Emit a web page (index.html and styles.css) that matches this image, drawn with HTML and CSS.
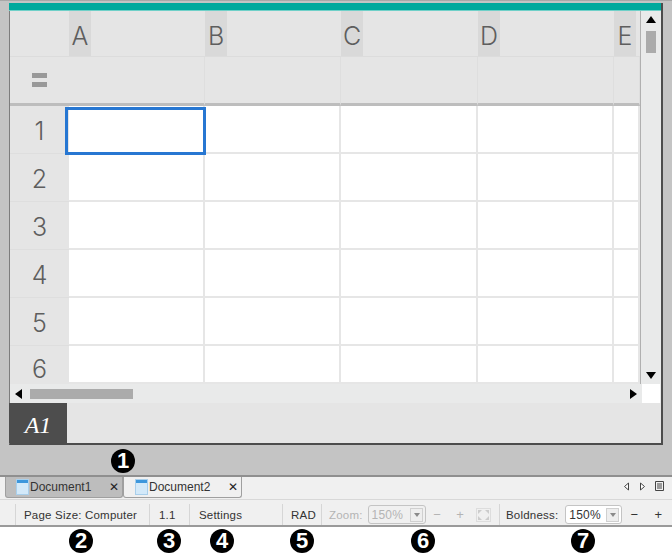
FILE: index.html
```html
<!DOCTYPE html>
<html lang="en">
<head>
  <meta charset="UTF-8">
  <meta name="viewport" content="width=device-width, initial-scale=1">
  <title>Document workspace</title>
  <link rel="stylesheet" href="styles.css">
</head>

<body>

  <!-- gray area around the document -->
  <div class="workspace">
    <div class="doc">
      <div class="doc__bar"></div>

      <div class="sheet-wrap">
        <div class="sheet">
          <div class="head head--corner"></div>
          <div class="head"><span class="col-chip">A</span></div>
          <div class="head"><span class="col-chip">B</span></div>
          <div class="head"><span class="col-chip">C</span></div>
          <div class="head"><span class="col-chip">D</span></div>
          <div class="head"><span class="col-chip">E</span></div>

          <div class="formula formula--corner"><span class="equals"></span></div>
          <div class="formula"></div>
          <div class="formula"></div>
          <div class="formula"></div>
          <div class="formula"></div>
          <div class="formula"></div>

          <div class="num">1</div>
          <div class="cell cell--active"></div>
          <div class="cell"></div><div class="cell"></div><div class="cell"></div><div class="cell"></div>

          <div class="num">2</div>
          <div class="cell"></div><div class="cell"></div><div class="cell"></div><div class="cell"></div><div class="cell"></div>

          <div class="num">3</div>
          <div class="cell"></div><div class="cell"></div><div class="cell"></div><div class="cell"></div><div class="cell"></div>

          <div class="num">4</div>
          <div class="cell"></div><div class="cell"></div><div class="cell"></div><div class="cell"></div><div class="cell"></div>

          <div class="num">5</div>
          <div class="cell"></div><div class="cell"></div><div class="cell"></div><div class="cell"></div><div class="cell"></div>

          <div class="num num--cut">6</div>
          <div class="cell"></div><div class="cell"></div><div class="cell"></div><div class="cell"></div><div class="cell"></div>
        </div>

        <div class="vscroll">
          <span class="arrow arrow--up"></span>
          <span class="vscroll__thumb"></span>
          <span class="arrow arrow--down"></span>
        </div>
      </div>

      <div class="hscroll">
        <span class="arrow arrow--left"></span>
        <span class="hscroll__thumb"></span>
        <span class="arrow arrow--right"></span>
        <span class="hscroll__corner"></span>
      </div>

      <div class="entry">
        <div class="entry__ref">A1</div>
      </div>
    </div>
  </div>

  <!-- document tabs -->
  <div class="tabs">
    <div class="tab tab--active">
      <svg class="tab__icon" width="13" height="16" viewBox="0 0 13 16"><rect x="0.5" y="0.5" width="12" height="15" fill="#d3e9f9" stroke="#a9cfeb"/><rect x="1" y="1" width="11" height="3" fill="#3d97dc"/></svg>
      <span class="tab__label">Document1</span>
      <span class="tab__close">&#10005;</span>
    </div>
    <div class="tab tab--second">
      <svg class="tab__icon" width="13" height="16" viewBox="0 0 13 16"><rect x="0.5" y="0.5" width="12" height="15" fill="#d3e9f9" stroke="#a9cfeb"/><rect x="1" y="1" width="11" height="3" fill="#3d97dc"/></svg>
      <span class="tab__label">Document2</span>
      <span class="tab__close">&#10005;</span>
    </div>
    <div class="tabs__nav">
      <svg width="7" height="9" viewBox="0 0 7 9"><path d="M5.5 1 1.5 4.5 5.5 8Z" fill="#fff" stroke="#444"/></svg>
      <svg width="7" height="9" viewBox="0 0 7 9"><path d="M1.5 1 5.5 4.5 1.5 8Z" fill="#fff" stroke="#444"/></svg>
      <svg width="9" height="10" viewBox="0 0 9 10"><path d="M.5.5h8v9h-8zM2 3h5M2 5h5M2 7h5" fill="none" stroke="#444"/></svg>
    </div>
  </div>

  <!-- status bar -->
  <div class="status">
    <div class="status__item status__item--page">Page Size: Computer</div>
    <div class="status__item status__item--num">1.1</div>
    <div class="status__item status__item--settings">Settings</div>
    <div class="status__item status__item--rad">RAD</div>
    <div class="status__item status__item--zoom is-off">
      <span>Zoom:</span>
      <span class="combo"><span class="combo__val">150%</span><span class="combo__btn"></span></span>
      <span class="step">&minus;</span>
      <span class="step">+</span>
      <svg class="fit-icon" width="15" height="14" viewBox="0 0 15 14"><rect x=".5" y=".5" width="14" height="13" fill="none" stroke="#ddd"/><path d="M2 2h4L2 6ZM13 2H9l4 4ZM2 12h4L2 8ZM13 12H9l4-4Z" fill="#ccc"/></svg>
    </div>
    <div class="status__item status__item--bold">
      <span>Boldness:</span>
      <span class="combo"><span class="combo__val">150%</span><span class="combo__btn"></span></span>
      <span class="step">&minus;</span>
      <span class="step">+</span>
    </div>
  </div>

  <!-- numbered callouts -->
  <span class="callout callout--1">1</span>
  <span class="callout callout--2">2</span>
  <span class="callout callout--3">3</span>
  <span class="callout callout--4">4</span>
  <span class="callout callout--5">5</span>
  <span class="callout callout--6">6</span>
  <span class="callout callout--7">7</span>

</body>
</html>
```

FILE: styles.css
```css
/* Reset */
*, *::before, *::after {
  margin: 0;
  padding: 0;
  box-sizing: border-box;
}
body {
  position: relative;
  width: 672px;
  height: 556px;
  overflow: hidden;
  background: #fff;
  font-family: "Liberation Sans", Arial, sans-serif;
  font-size: 11.5px;
  color: #333;
}

/* ===== Gray area ===== */
.workspace {
  height: 477px;
  padding: 2px 9px 0 9px;
  background: #c4c4c4;
  border-top: 1px solid #a8a8a8;
  border-bottom: 2px solid #8f8f8f;
}
.doc {
  height: 442px;
  background: #e5e5e5;
  border-left: 1px solid #7d7d7d;
  border-right: 2px solid #4c4c4c;
  border-bottom: 2px solid #4c4c4c;
}
.doc__bar {
  height: 8px;
  margin-left: -1px;
  background: #00a99d;
  border-bottom: 1px solid #6fd0c8;
}

/* ===== Sheet ===== */
.sheet-wrap {
  display: flex;
  height: 373px;
}
.sheet {
  flex: none;
  width: 630px;
  height: 373px;
  overflow: hidden;
  display: grid;
  grid-template-columns: 59px 136px 136px 137px 136px 26px;
  grid-template-rows: 46px 49px repeat(5, 48px) 38px;
  background: #fff;
}
.head {
  background: #e5e5e5;
  border-bottom: 1px solid #dcdcdc;
}
.head--corner {
  margin-right: 0;
}
.col-chip {
  display: block;
  width: 22px;
  height: 45px;
  background: #d9d9d9;
  font-family: "Inter", sans-serif;
  font-weight: 300;
  font-size: 25px;
  line-height: 50px;
  text-align: center;
  color: #5e5e5e;
}
.formula {
  background: #e5e5e5;
  border-right: 1px solid #dedede;
  border-bottom: 3px solid #bdbdbd;
}
.formula--corner {
  border-right: 0;
  display: flex;
  align-items: center;
  justify-content: center;
}
.equals {
  width: 15px;
  height: 14px;
  border-top: 5px solid #999;
  border-bottom: 5px solid #999;
}
.num {
  background: #e5e5e5;
  border-bottom: 1px solid #dedede;
  font-family: "Inter", sans-serif;
  font-weight: 300;
  font-size: 25px;
  line-height: 50px;
  text-align: center;
  color: #5e5e5e;
}
.num--cut {
  padding-top: 8px;
  line-height: 30px;
  border-bottom: 0;
}
.cell {
  background: #fff;
  border-right: 2px solid #e6e6e6;
  border-bottom: 2px solid #e6e6e6;
}
.cell--active {
  position: relative;
}
/* selection frame sits over the neighbouring grid lines */
.cell--active::after {
  content: "";
  position: absolute;
  top: 1px;
  left: -4px;
  width: 141px;
  height: 48px;
  border: 3px solid #2777d2;
}

/* ===== Scrollbars ===== */
.vscroll {
  flex: 1;
  display: flex;
  flex-direction: column;
  align-items: center;
  padding-top: 5px;
  background: #e9eaea;
  border-left: 1px solid #b0b0b0;
}
.vscroll__thumb {
  width: 10px;
  height: 22px;
  margin-top: 8px;
  background: #ababab;
}
.arrow {
  flex: none;
  width: 0;
  height: 0;
  border-style: solid;
  border-color: transparent;
}
.arrow--up {
  border-width: 0 5px 7px 5px;
  border-bottom-color: #000;
}
.arrow--down {
  margin-top: auto;
  margin-bottom: 5px;
  border-width: 7px 5px 0 5px;
  border-top-color: #000;
}
.arrow--left {
  border-width: 5px 7px 5px 0;
  border-right-color: #000;
}
.arrow--right {
  border-width: 5px 0 5px 7px;
  border-left-color: #000;
  margin-left: auto;
}
.hscroll {
  display: flex;
  align-items: center;
  height: 19px;
  padding-left: 5px;
  padding-right: 1px;
  background: #e9eaea;
}
.hscroll__thumb {
  width: 103px;
  height: 10px;
  margin-left: 8px;
  background: #ababab;
}
.hscroll__corner {
  width: 18px;
  height: 19px;
  margin-left: 5px;
  background: #fff;
}

/* ===== Entry line ===== */
.entry {
  height: 40px;
  background: #e5e5e5;
}
.entry__ref {
  width: 58px;
  height: 40px;
  margin-left: -1px;
  background: #4d4d4d;
  color: #fff;
  font-family: "Liberation Serif", serif;
  font-style: italic;
  font-size: 24px;
  line-height: 44px;
  text-align: center;
}

/* ===== Tabs ===== */
.tabs {
  display: flex;
  height: 23px;
  padding-left: 5px;
  background: #f0f0f0;
  border-bottom: 1px solid #d8d8d8;
}
.tab {
  display: flex;
  align-items: center;
  width: 118px;
  height: 21px;
  padding: 0 3px 0 10px;
  background: #f0f0f0;
  border: 1px solid #9f9f9f;
  border-top: 0;
  border-radius: 0 0 3px 3px;
  font-size: 12px;
}
.tab--active {
  background: #bdbdbd;
}
.tab--second {
  width: 119px;
  padding-left: 11px;
}
.tab__icon {
  flex: none;
  margin-right: 1px;
}
.tab__label {
  flex: 1;
  white-space: nowrap;
}
.tab__close {
  font-family: "DejaVu Sans", sans-serif;
  font-size: 12px;
  font-weight: bold;
  color: #222;
}
.tabs__nav {
  display: flex;
  align-items: center;
  gap: 9px;
  margin-left: auto;
  padding: 0 8px 4px 0;
}

/* ===== Status bar ===== */
.status {
  display: flex;
  align-items: flex-end;
  height: 27px;
  padding-left: 15px;
  background: #f0f0f0;
  border-bottom: 2px solid #9a9a9a;
  white-space: nowrap;
}
.status__item {
  display: flex;
  align-items: center;
  height: 21px;
  padding-left: 8px;
  border-left: 1px solid #d6d6d6;
  letter-spacing: 0.2px;
}
.status__item--page { width: 134px; }
.status__item--num { width: 40px; padding-left: 9px; }
.status__item--settings { width: 93px; padding-left: 9px; }
.status__item--rad { width: 39px; }
.status__item--zoom { width: 178px; padding-left: 7px; }
.status__item--bold { flex: 1; padding-left: 6px; }
.status__item--bold .combo {
  width: 57px;
  margin-left: 7px;
}
.status__item--bold .step {
  width: 24px;
}
.is-off {
  color: #b4b4b4;
}
.combo {
  display: flex;
  align-items: center;
  justify-content: space-between;
  width: 58px;
  height: 19px;
  margin-left: 5px;
  padding: 0 2px 0 3px;
  background: #fff;
  border: 1px solid #c4c4c4;
  border-radius: 3px;
  font-size: 12px;
}
.is-off .combo {
  background: #f0f0f0;
}
.combo__btn {
  position: relative;
  width: 13px;
  height: 14px;
  background: #eee;
  border: 1px solid #d0d0d0;
}
.combo__btn::after {
  content: "";
  position: absolute;
  top: 4px;
  left: 3px;
  border-style: solid;
  border-width: 4px 3px 0 3px;
  border-color: #8a8a8a transparent transparent transparent;
}
.step {
  width: 23px;
  text-align: center;
  font-size: 13px;
}
.fit-icon {
  margin-left: 4px;
}

/* ===== Callouts ===== */
.callout {
  position: absolute;
  width: 24px;
  height: 24px;
  border-radius: 50%;
  background: #000;
  color: #fff;
  font-weight: bold;
  font-size: 22px;
  line-height: 24px;
  text-align: center;
}
.callout--1 { left: 111px; top: 449px; }
.callout--2 { left: 69px; top: 529px; }
.callout--3 { left: 157px; top: 529px; }
.callout--4 { left: 210px; top: 529px; }
.callout--5 { left: 290px; top: 529px; }
.callout--6 { left: 411px; top: 529px; }
.callout--7 { left: 571px; top: 529px; }
```
